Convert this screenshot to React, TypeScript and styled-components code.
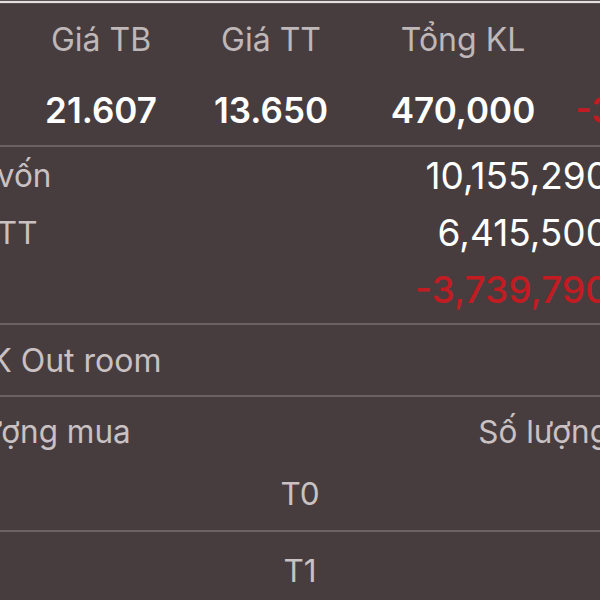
import React from 'react';
import styled, { createGlobalStyle } from 'styled-components';

const GlobalStyle = createGlobalStyle`
  html, body {
    margin: 0;
    padding: 0;
    width: 600px;
    height: 600px;
    overflow: hidden;
    background: #473d3f;
  }
`;

// the screen is wider than the frame: its left part and a few px on the right are cropped
const Screen = styled.div`
  width: 709px;
  margin-left: -100px;
  font-family: Inter, 'Liberation Sans', Arial, sans-serif;
  color: #c9c1c2;
`;

const TopRule = styled.div`
  height: 2px;
  border-top: 1px solid #5c5355;
  border-bottom: 1px solid #5a5153;
  background: #e4e0e1;
`;

const SummaryGrid = styled.div`
  display: grid;
  grid-template-columns: 116px 170px 170px 214px 160px;
  grid-template-rows: 71px 70px;
  align-items: center;
  justify-items: center;
  white-space: nowrap;
`;

const HeadCell = styled.div`
  font-size: 32px;
  color: #bfb7b8;
`;

const ValueCell = styled.div<{ $tone?: 'down' }>`
  font-size: 35px;
  font-weight: 600;
  color: ${(p) => (p.$tone === 'down' ? '#c21c22' : '#ffffff')};
`;

const Divider = styled.div`
  height: 2px;
  background: #6b6264;
`;

const InfoBlock = styled.div`
  padding-bottom: 5px;
`;

const InfoRow = styled.div`
  height: 57px;
  display: flex;
  align-items: center;
  justify-content: space-between;
  white-space: nowrap;
`;

const Label = styled.span`
  font-size: 31.5px;
  color: #c9c1c2;
`;

const Amount = styled.span<{ $tone?: 'down' }>`
  font-size: 37px;
  color: ${(p) => (p.$tone === 'down' ? '#c21c22' : '#ffffff')};
  font-weight: ${(p) => (p.$tone === 'down' ? 500 : 400)};
`;

const OptionRow = styled.div`
  height: 70px;
  display: flex;
  align-items: center;
  font-size: 32px;
  white-space: nowrap;
`;

const TableHead = styled.div`
  height: 58px;
  display: flex;
  align-items: flex-end;
  justify-content: space-between;
  box-sizing: border-box;
  padding-bottom: 6px;
  line-height: 34px;
  font-size: 31.5px;
  white-space: nowrap;
`;

const TermRow = styled.div`
  height: 75px;
  box-sizing: border-box;
  padding: 22px 0 0 91px;
  line-height: 34px;
  text-align: center;
  font-size: 31.5px;
  color: #c9c1c2;
`;

const summary = [
  { head: 'Mã', value: 'HPG' },
  { head: 'Giá TB', value: '21.607' },
  { head: 'Giá TT', value: '13.650' },
  { head: 'Tổng KL', value: '470,000' },
  { head: 'Lãi/lỗ', value: '-36.83%', tone: 'down' as const },
];

const info = [
  { label: 'Giá trị vốn', value: '10,155,290' },
  { label: 'Giá trị TT', value: '6,415,500' },
  { label: 'Lãi/lỗ', value: '-3,739,790', tone: 'down' as const },
];

export default function App() {
  return (
    <>
      <GlobalStyle />
      <Screen>
        <TopRule />
        <SummaryGrid>
          {summary.map((s) => (
            <HeadCell key={s.head}>{s.head}</HeadCell>
          ))}
          {summary.map((s) => (
            <ValueCell key={s.head} $tone={s.tone}>
              {s.value}
            </ValueCell>
          ))}
        </SummaryGrid>
        <Divider />
        <InfoBlock>
          {info.map((row) => (
            <InfoRow key={row.label}>
              <Label>{row.label}</Label>
              <Amount $tone={row.tone}>{row.value}</Amount>
            </InfoRow>
          ))}
        </InfoBlock>
        <Divider />
        <OptionRow>Bán CK Out room</OptionRow>
        <Divider />
        <TableHead>
          <span>Khối lượng mua</span>
          <span>Số lượng</span>
        </TableHead>
        <TermRow>T0</TermRow>
        <Divider />
        <TermRow>T1</TermRow>
      </Screen>
    </>
  );
}
